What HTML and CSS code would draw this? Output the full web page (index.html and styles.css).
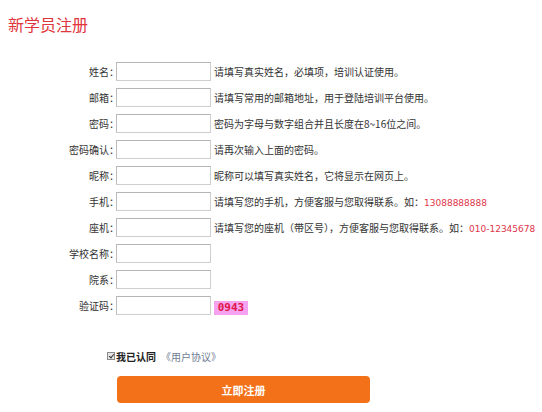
FILE: index.html
```html
<!DOCTYPE html>
<html lang="zh-CN">
<head>
<meta charset="utf-8">
<title>新学员注册</title>
<link rel="stylesheet" href="styles.css">
</head>
<body>
<div class="page">
  <h1 class="title">新学员注册</h1>
  <form class="form">
    <div class="row"><label class="lbl">姓名：</label><input class="inp" type="text"><span class="hint">请填写真实姓名，必填项，培训认证使用。</span></div>
    <div class="row"><label class="lbl">邮箱：</label><input class="inp" type="text"><span class="hint">请填写常用的邮箱地址，用于登陆培训平台使用。</span></div>
    <div class="row"><label class="lbl">密码：</label><input class="inp" type="password"><span class="hint">密码为字母与数字组合并且长度在8~16位之间。</span></div>
    <div class="row"><label class="lbl">密码确认：</label><input class="inp" type="password"><span class="hint">请再次输入上面的密码。</span></div>
    <div class="row"><label class="lbl">昵称：</label><input class="inp" type="text"><span class="hint">昵称可以填写真实姓名，它将显示在网页上。</span></div>
    <div class="row"><label class="lbl">手机：</label><input class="inp" type="text"><span class="hint">请填写您的手机，方便客服与您取得联系。如：<em class="red">13088888888</em></span></div>
    <div class="row"><label class="lbl">座机：</label><input class="inp" type="text"><span class="hint">请填写您的座机（带区号），方便客服与您取得联系。如：<em class="red">010-12345678</em></span></div>
    <div class="row"><label class="lbl">学校名称：</label><input class="inp" type="text"></div>
    <div class="row"><label class="lbl">院系：</label><input class="inp" type="text"></div>
    <div class="row"><label class="lbl">验证码：</label><input class="inp" type="text"><span class="hint"><span class="captcha">0943</span></span></div>
    <div class="agree"><input class="chk" type="checkbox" checked><span class="agree-text">我已认同</span><a class="agree-link" href="#">《用户协议》</a></div>
    <div class="actions"><button class="btn" type="button">立即注册</button></div>
  </form>
</div>
</body>
</html>
```
FILE: styles.css
```css
html, body {
  margin: 0;
  padding: 0;
  background: #fff;
}
body {
  font-family: "Noto Sans CJK SC", "Liberation Sans", sans-serif;
  color: #333;
  font-size: 10px;
}
.page {
  padding: 0 8px;
}
.title {
  margin: 14px 0 0;
  font-size: 16px;
  line-height: 20px;
  font-weight: normal;
  color: #e0353d;
}
.form {
  margin-top: 28px;
}
.row {
  display: grid;
  grid-template-columns: 105px 95px auto;
  column-gap: 3px;
  height: 26px;
  align-items: start;
}
.lbl {
  text-align: right;
  line-height: 19px;
  font-size: 10px;
  white-space: nowrap;
  margin-right: -6px;
}
.inp {
  box-sizing: border-box;
  width: 95px;
  height: 19px;
  margin: 0;
  padding: 0 2px;
  border: 1px solid #cfcfcf;
  border-top-color: #b5b5b5;
  border-left-color: #bcbcbc;
  background: #fff;
  font-size: 10px;
}
.hint {
  line-height: 19px;
  font-size: 10px;
  white-space: nowrap;
}
.red {
  font-style: normal;
  color: #e0354a;
  font-family: "DejaVu Sans", sans-serif;
  font-size: 9px;
}
.captcha {
  display: inline-block;
  margin-top: 5px;
  width: 34px;
  height: 14px;
  line-height: 14px;
  text-align: center;
  background: #f5a3f0;
  color: #e0164a;
  font-family: "DejaVu Sans Mono", monospace;
  font-weight: bold;
  font-size: 11px;
  vertical-align: top;
}
.agree {
  display: flex;
  align-items: center;
  margin-top: 27px;
  margin-left: 99px;
  height: 14px;
}
.chk {
  appearance: none;
  -webkit-appearance: none;
  width: 8px;
  height: 8px;
  margin: 0 1px 0 0;
  border: 1px solid #8a8a8a;
  background: #e6e6e6;
  position: relative;
}
.chk::after {
  content: "";
  position: absolute;
  left: 2px;
  top: 0;
  width: 2px;
  height: 4px;
  border: solid #333;
  border-width: 0 1.5px 1.5px 0;
  transform: rotate(40deg);
}
.agree-text {
  font-size: 10px;
  font-weight: bold;
  color: #222;
}
.agree-link {
  margin-left: 5px;
  font-size: 10px;
  color: #6f7c93;
  text-decoration: none;
}
.actions {
  margin-top: 13px;
  margin-left: 109px;
}
.btn {
  display: block;
  width: 253px;
  height: 27px;
  margin: 0;
  padding: 0;
  border: 0;
  border-radius: 4px;
  background: #f37219;
  color: #fff;
  font-family: "Noto Sans CJK SC", sans-serif;
  font-size: 11px;
  font-weight: bold;
  cursor: pointer;
}
```
